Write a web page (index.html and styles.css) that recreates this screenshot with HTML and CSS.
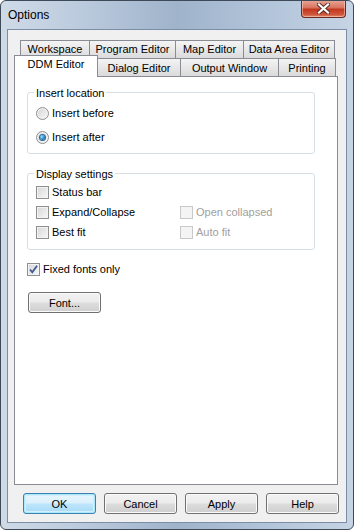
FILE: index.html
```html
<!DOCTYPE html>
<html lang="en">
<head>
  <meta charset="UTF-8" />
  <title>Options</title>
  <link rel="stylesheet" href="styles.css">
</head>
<body>
  <div class="window">
    <div class="titlebar">
      <span class="title">Options</span>
      <div class="close">
        <svg width="13" height="11" viewBox="0 0 13 11">
          <path d="M2 1.5 L11 9.5 M11 1.5 L2 9.5" stroke="#5a2a24" stroke-width="4" stroke-linecap="square"/>
          <path d="M2 1.5 L11 9.5 M11 1.5 L2 9.5" stroke="#ffffff" stroke-width="2.2" stroke-linecap="square"/>
        </svg>
      </div>
    </div>

    <div class="client">
      <div class="tabrow back">
        <div class="tab w-workspace">Workspace</div>
        <div class="tab w-program">Program Editor</div>
        <div class="tab w-map">Map Editor</div>
        <div class="tab w-data">Data Area Editor</div>
      </div>
      <div class="tabrow front">
        <div class="tab selected w-ddm">DDM Editor</div>
        <div class="tab w-dialog">Dialog Editor</div>
        <div class="tab w-output">Output Window</div>
        <div class="tab w-printing">Printing</div>
      </div>

      <div class="panel">
        <div class="group first">
          <div class="group-title">Insert location</div>
          <div class="row radio-row"><span class="radio"></span>Insert before</div>
          <div class="row radio-row"><span class="radio checked"></span>Insert after</div>
        </div>

        <div class="group second">
          <div class="group-title">Display settings</div>
          <div class="grid">
            <div class="row"><span class="check"></span>Status bar</div>
            <div class="row"></div>
            <div class="row"><span class="check"></span>Expand/Collapse</div>
            <div class="row disabled"><span class="check"></span>Open collapsed</div>
            <div class="row"><span class="check"></span>Best fit</div>
            <div class="row disabled"><span class="check"></span>Auto fit</div>
          </div>
        </div>

        <div class="row fixed">
          <span class="check">
            <svg width="11" height="11" viewBox="0 0 11 11">
              <path d="M2 5.5 L4.3 8.3 L9 1.8" fill="none" stroke="#3d5a93" stroke-width="1.8"/>
            </svg>
          </span>Fixed fonts only
        </div>

        <button class="btn font-btn">Font...</button>
      </div>

      <div class="buttons">
        <button class="btn default">OK</button>
        <button class="btn">Cancel</button>
        <button class="btn">Apply</button>
        <button class="btn">Help</button>
      </div>
    </div>
  </div>
</body>
</html>
```

FILE: styles.css
```css
* {
  box-sizing: border-box;
}
body {
  margin: 0;
  background: #ffffff;
  font-family: "Liberation Sans", Arial, sans-serif;
  font-size: 11px;
  color: #000;
}
.window {
  width: 354px;
  height: 530px;
  border: 1px solid #3f4a58;
  border-radius: 6px;
  background: linear-gradient(90deg, #cfdae7 0%, #b9c9dc 25%, #9fb3cb 50%, #afc2d8 72%, #c6d4e4 100%);
  display: flex;
  flex-direction: column;
  overflow: hidden;
}
.titlebar {
  height: 28px;
  display: flex;
  justify-content: space-between;
  padding-left: 7px;
  padding-right: 7px;
}
.title {
  font-size: 12px;
  line-height: 28px;
  align-self: center;
}
.close {
  width: 45px;
  height: 18px;
  margin-top: -1px;
  border: 1px solid #6b2b22;
  border-top: none;
  border-radius: 0 0 4px 4px;
  background: linear-gradient(#e9a99b 0%, #d8745f 45%, #c2381f 55%, #d0553a 85%, #e08a6c 100%);
  box-shadow: inset 0 0 0 1px rgba(255, 220, 210, 0.5);
  display: flex;
  align-items: center;
  justify-content: center;
}
.client {
  flex: 1;
  margin: 0 6px 6px 6px;
  border: 1px solid #7b8ea5;
  background: #f0f0f0;
  padding: 10px 0 8px 6px;
}
.tabrow {
  display: flex;
  height: 18px;
  align-items: flex-start;
}
.tabrow.back {
  margin-left: 6px;
}
.tab {
  height: 19px;
  margin-right: -1px;
  border: 1px solid #898c95;
  border-bottom: none;
  background: linear-gradient(#f4f4f4, #e7e7e7 50%, #dadada);
  text-align: center;
  line-height: 17px;
  white-space: nowrap;
}
.tabrow.front .tab {
  height: 18px;
}
.tabrow.front .tab.selected {
  position: relative;
  z-index: 1;
  height: 22px;
  margin-top: -3px;
  background: #ffffff;
  line-height: 17px;
}
.w-workspace { width: 70px; }
.w-program { width: 87px; }
.w-map { width: 69px; }
.w-data { width: 92px; }
.w-ddm { width: 84px; }
.w-dialog { width: 84px; line-height: 19px !important; }
.w-output { width: 99px; line-height: 19px !important; }
.w-printing { width: 58px; line-height: 19px !important; }
.panel {
  width: 324px;
  height: 409px;
  border: 1px solid #898c95;
  background: #ffffff;
  padding-top: 15px;
}
.group {
  margin-left: 12px;
  width: 288px;
  border: 1px solid #d5dfe5;
  border-radius: 3px;
  padding: 0 0 4px 8px;
}
.group.second {
  margin-top: 19px;
  padding-bottom: 7px;
}
.group-title {
  width: max-content;
  margin: -6px 0 1px -2px;
  padding: 0 2px;
  background: #ffffff;
  line-height: 13px;
}
.group.second .group-title {
  margin-bottom: 1px;
}
.row {
  display: flex;
  align-items: center;
  height: 20px;
  white-space: nowrap;
}
.radio-row {
  height: 24px;
}
.grid {
  display: grid;
  grid-template-columns: 144px 1fr;
}
.row.disabled {
  color: #a0a0a0;
}
.radio {
  width: 13px;
  height: 13px;
  margin-right: 3px;
  border: 1px solid #8e8f8f;
  border-radius: 50%;
  background: linear-gradient(135deg, #d4d4d4, #f9f9f9);
  box-shadow: inset 0 0 0 1px #f4f4f4;
  display: flex;
  align-items: center;
  justify-content: center;
}
.radio.checked::after {
  content: "";
  width: 5px;
  height: 5px;
  border-radius: 50%;
  background: radial-gradient(circle at 35% 35%, #9ae0ff, #1f7fc0 60%, #0f4f86);
  box-shadow: 0 0 0 1px #2a6a9e;
}
.check {
  width: 13px;
  height: 13px;
  margin-right: 3px;
  border: 1px solid #8e8f8f;
  background: linear-gradient(135deg, #d6d6d6, #f8f8f8);
  box-shadow: inset 0 0 0 1px #f3f3f3;
  display: flex;
  align-items: center;
  justify-content: center;
}
.row.disabled .check {
  border-color: #c9c9c9;
  background: #f4f4f4;
  box-shadow: none;
}
.row.fixed {
  margin: 9px 0 0 12px;
}
.btn {
  display: block;
  width: 73px;
  height: 21px;
  padding: 0;
  border: 1px solid #707070;
  border-radius: 3px;
  background: linear-gradient(#f2f2f2 0%, #ebebeb 49%, #dddddd 51%, #cfcfcf 100%);
  box-shadow: inset 0 0 0 1px #fbfbfb;
  font-family: "Liberation Sans", Arial, sans-serif;
  font-size: 11px;
  color: #000;
}
.font-btn {
  margin: 13px 0 0 13px;
}
.buttons {
  display: flex;
  gap: 8px;
  margin: 8px 0 0 9px;
}
.btn.default {
  border-color: #3c7fb1;
  background: linear-gradient(#eaf6fd 0%, #d9f0fc 49%, #bee6fd 51%, #a7d9f5 100%);
  box-shadow: inset 0 0 0 1px #48d7fb40, inset 0 0 0 2px #d0eefc;
}
```
